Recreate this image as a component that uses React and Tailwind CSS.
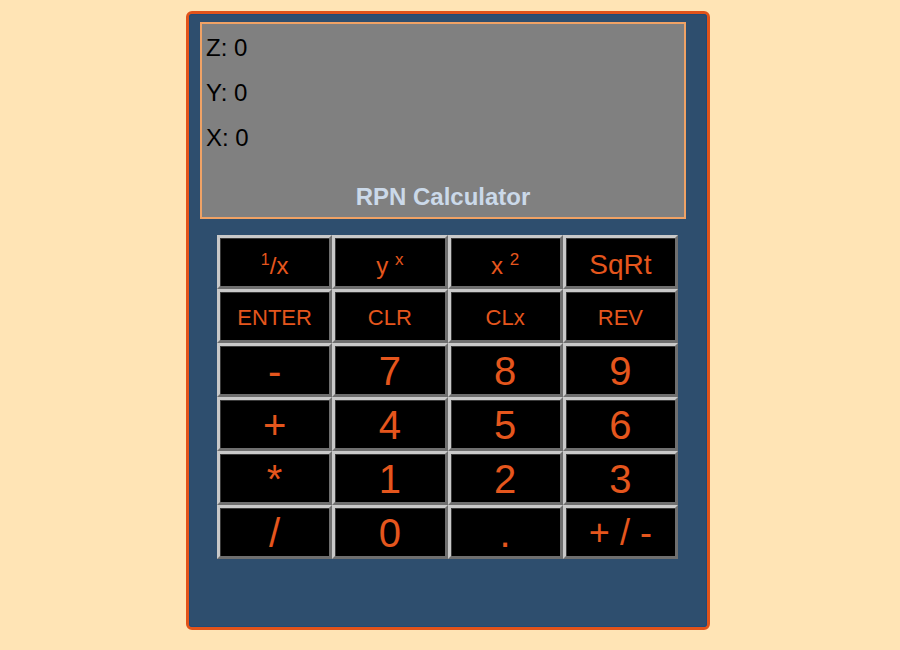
const keys = [
  { label: <><span className="relative -top-[9px] text-[16px]">1</span>/x</>, size: 'text-[24px] pt-[7px]' },
  { label: <>y <span className="relative -top-[9px] text-[17px]">x</span></>, size: 'text-[24px] pt-[7px]' },
  { label: <>x <span className="relative -top-[9px] text-[17px]">2</span></>, size: 'text-[24px] pt-[7px]' },
  { label: 'SqRt', size: 'text-[28px] pt-[5px]' },
  { label: 'ENTER', size: 'text-[22px] pt-[4px]' },
  { label: 'CLR', size: 'text-[22px] pt-[4px]' },
  { label: 'CLx', size: 'text-[22px] pt-[4px]' },
  { label: 'REV', size: 'text-[22px] pt-[4px]' },
  { label: '-', size: 'text-[40px] pt-[2px]' },
  { label: '7', size: 'text-[40px] pt-[2px]' },
  { label: '8', size: 'text-[40px] pt-[2px]' },
  { label: '9', size: 'text-[40px] pt-[2px]' },
  { label: '+', size: 'text-[40px] pt-[2px]' },
  { label: '4', size: 'text-[40px] pt-[2px]' },
  { label: '5', size: 'text-[40px] pt-[2px]' },
  { label: '6', size: 'text-[40px] pt-[2px]' },
  { label: '*', size: 'text-[40px] pt-[2px]' },
  { label: '1', size: 'text-[40px] pt-[2px]' },
  { label: '2', size: 'text-[40px] pt-[2px]' },
  { label: '3', size: 'text-[40px] pt-[2px]' },
  { label: '/', size: 'text-[40px] pt-[2px]' },
  { label: '0', size: 'text-[40px] pt-[2px]' },
  { label: '.', size: 'text-[40px] pt-[2px]' },
  { label: '+ / -', size: 'text-[36px] pt-[2px]' },
]

const Key = ({ label, size }) => (
  <button
    className={`h-[54px] flex items-center justify-center bg-black text-[#e5561d] leading-none border-[3px] border-t-[#c9c9c9] border-l-[#c9c9c9] border-r-[#6f6f6f] border-b-[#6f6f6f] shadow-[inset_1px_1px_0_#3a3a3a] ${size}`}
  >
    <span>{label}</span>
  </button>
)

export default function App() {
  const stack = [
    ['Z', 0],
    ['Y', 0],
    ['X', 0],
  ]

  return (
    <div className="min-h-[650px] bg-[#ffe4b5] pt-[11px] font-['Liberation_Sans',Arial,sans-serif]">
      <div className="ml-[186px] w-[524px] h-[619px] rounded-[6px] border-[3px] border-[#e1531a] bg-[#2e4e6e]">
        <div className="h-full border border-[#1f4a78] rounded-[3px] pt-[7px]">
          <div className="ml-[10px] w-[486px] h-[197px] border-2 border-[#f0a265] bg-[#808080] flex flex-col pt-[1px] px-[4px]">
            {stack.map(([name, val]) => (
              <div key={name} className="leading-[45px] text-[24px] text-black">
                {name}: {val}
              </div>
            ))}
            <div className="mt-auto mb-[6px] text-center text-[24px] leading-[28px] font-bold text-[#cbd9e9]">
              RPN Calculator
            </div>
          </div>

          <div className="ml-[27px] mt-[16px] w-[461px] grid grid-cols-4">
            {keys.map((k, i) => (
              <Key key={i} label={k.label} size={k.size} />
            ))}
          </div>
        </div>
      </div>
    </div>
  )
}
